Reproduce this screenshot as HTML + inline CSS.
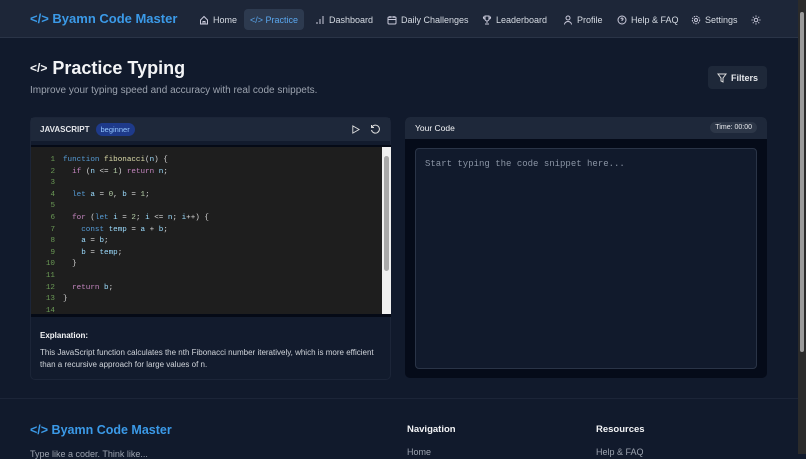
<!DOCTYPE html>
<html><head><meta charset="utf-8"><style>
*{box-sizing:border-box;margin:0;padding:0}
body{width:806px;height:454px;overflow:hidden;background:#111a2c;font-family:"Liberation Sans",sans-serif;color:#e5e7eb;position:relative}
.hdr{position:absolute;left:0;top:0;width:798px;height:38px;background:#1d2638;border-bottom:1px solid #2a3447}
.logo{position:absolute;left:30px;top:11px;color:#3b9ae8;font-weight:bold;font-size:13px}
.nav{position:absolute;top:9px;height:21px;font-size:9px;color:#d6dbe3;display:flex;align-items:center;gap:4px;padding:0 6px;border-radius:4px;white-space:nowrap}
.nav svg{width:10px;height:10px}
.sb{position:absolute;right:0;top:0;width:8px;height:454px;background:#2b2b2b}
.panel{position:absolute;border-radius:5px}
.code{font-family:"Liberation Mono",monospace;font-size:7.6px;line-height:11.6px;white-space:pre}
.ln{display:inline-block;width:24px;text-align:right;color:#6a9955;margin-right:8px}
.k{color:#569cd6}.c{color:#c586c0}.v{color:#9cdcfe}.f{color:#dcdcaa}.n{color:#b5cea8}.t{color:#d4d4d4}
</style></head><body>
<div class="hdr">
<div class="logo">&lt;/&gt; Byamn Code Master</div>
<div class="nav" style="left:193px"><svg viewBox="0 0 10 10" fill="none" stroke="#ccd" stroke-width="1"><path d="M1.5 5L5 1.5 8.5 5V9h-7z M4 9V6.5h2V9"/></svg>Home</div>
<div class="nav" style="left:244px;background:#2d3a4f;color:#5aa7ee;width:60px">&lt;/&gt; Practice</div>
<div class="nav" style="left:309px"><svg viewBox="0 0 10 10" stroke="#ccd"><path d="M2 9V7M5 9V4M8 9V1"/></svg>Dashboard</div>
<div class="nav" style="left:381px"><svg viewBox="0 0 10 10" fill="none" stroke="#ccd"><rect x="1" y="2" width="8" height="7" rx="1"/><path d="M1 4.5h8M3 1v2M7 1v2"/></svg>Daily Challenges</div>
<div class="nav" style="left:476px"><svg viewBox="0 0 10 10" fill="none" stroke="#ccd"><path d="M3 1h4v3a2 2 0 0 1-4 0zM5 6v2M3 9h4M3 2H1.5a1.5 1.5 0 0 0 1.5 2M7 2h1.5A1.5 1.5 0 0 1 7 4"/></svg>Leaderboard</div>
<div class="nav" style="left:557px"><svg viewBox="0 0 10 10" fill="none" stroke="#ccd"><circle cx="5" cy="3" r="2"/><path d="M1.5 9.5a3.5 3 0 0 1 7 0"/></svg>Profile</div>
<div class="nav" style="left:611px"><svg viewBox="0 0 10 10" fill="none" stroke="#ccd"><circle cx="5" cy="5" r="4"/><path d="M4 4a1 1 0 1 1 1 1v1M5 7.5v.3"/></svg>Help &amp; FAQ</div>
<div class="nav" style="left:685px"><svg viewBox="0 0 10 10" fill="none" stroke="#ccd"><circle cx="5" cy="5" r="1.5"/><circle cx="5" cy="5" r="3.7" stroke-dasharray="1.5 1"/></svg>Settings</div>
<div class="nav" style="left:745px"><svg viewBox="0 0 10 10" fill="none" stroke="#ccd"><circle cx="5" cy="5" r="1.8"/><path d="M5 0.5v1.2M5 8.3v1.2M0.5 5h1.2M8.3 5h1.2M1.8 1.8l.9.9M7.3 7.3l.9.9M1.8 8.2l.9-.9M7.3 2.7l.9-.9"/></svg></div>
</div>

<div style="position:absolute;left:30px;top:58px;font-size:18px;font-weight:bold;color:#f3f4f6"><span style="font-size:12px;vertical-align:2px">&lt;/&gt;</span> Practice Typing</div>
<div style="position:absolute;left:30px;top:85px;font-size:10px;color:#9ca3af">Improve your typing speed and accuracy with real code snippets.</div>
<div style="position:absolute;left:708px;top:66px;width:59px;height:23px;background:#1e2839;border-radius:4px;font-size:9px;font-weight:bold;color:#e5e7eb;display:flex;align-items:center;justify-content:center;gap:4px"><svg width="10" height="10" viewBox="0 0 10 10" fill="none" stroke="#ddd"><path d="M1 1h8L6 5v4L4 8V5z"/></svg>Filters</div>

<div class="panel" style="left:30px;top:117px;width:361px;height:263px;background:#121b2d;border:1px solid #1c2538">
<div style="height:23px;background:#1e283a;display:flex;align-items:center;padding-left:9px;font-size:8px;font-weight:bold;color:#e5e7eb">JAVASCRIPT<span style="margin-left:6px;background:#1e3a8a;color:#93c5fd;font-weight:normal;font-size:7.5px;padding:2px 5px;border-radius:7px">beginner</span>
<svg style="position:absolute;left:320px;top:7px" width="9" height="9" viewBox="0 0 10 10" fill="none" stroke="#ddd"><path d="M2 1l7 4-7 4z"/></svg>
<svg style="position:absolute;left:339px;top:6px" width="10" height="10" viewBox="0 0 10 10" fill="none" stroke="#ddd"><path d="M2 3a4 4 0 1 1-.5 3M1.5 1v2.5H4"/></svg></div>
<div style="position:absolute;left:0;top:27px;width:360px;height:172px;background:#1e1e1e;border-top:2px solid #050a16;border-bottom:3px solid #050a16;overflow:hidden">
<div class="code" style="position:absolute;left:0;top:8px"><span class="ln">1</span><span class="k">function</span> <span class="f">fibonacci</span><span class="t">(</span><span class="v">n</span><span class="t">) {</span>
<span class="ln">2</span>  <span class="c">if</span> <span class="t">(</span><span class="v">n</span> <span class="t">&lt;= </span><span class="n">1</span><span class="t">)</span> <span class="c">return</span> <span class="v">n</span><span class="t">;</span>
<span class="ln">3</span>
<span class="ln">4</span>  <span class="k">let</span> <span class="v">a</span> <span class="t">=</span> <span class="n">0</span><span class="t">,</span> <span class="v">b</span> <span class="t">=</span> <span class="n">1</span><span class="t">;</span>
<span class="ln">5</span>
<span class="ln">6</span>  <span class="c">for</span> <span class="t">(</span><span class="k">let</span> <span class="v">i</span> <span class="t">=</span> <span class="n">2</span><span class="t">;</span> <span class="v">i</span> <span class="t">&lt;=</span> <span class="v">n</span><span class="t">;</span> <span class="v">i</span><span class="t">++) {</span>
<span class="ln">7</span>    <span class="k">const</span> <span class="v">temp</span> <span class="t">=</span> <span class="v">a</span> <span class="t">+</span> <span class="v">b</span><span class="t">;</span>
<span class="ln">8</span>    <span class="v">a</span> <span class="t">=</span> <span class="v">b</span><span class="t">;</span>
<span class="ln">9</span>    <span class="v">b</span> <span class="t">=</span> <span class="v">temp</span><span class="t">;</span>
<span class="ln">10</span>  <span class="t">}</span>
<span class="ln">11</span>
<span class="ln">12</span>  <span class="c">return</span> <span class="v">b</span><span class="t">;</span>
<span class="ln">13</span><span class="t">}</span>
<span class="ln">14</span></div>
<div style="position:absolute;right:0;top:0;width:9px;height:100%;background:#f0f0f0"><div style="position:absolute;left:2px;top:9px;width:5px;height:115px;background:#a8a8a8;border-radius:3px"></div></div>
</div>
<div style="position:absolute;left:9px;top:213px;font-size:8px;font-weight:bold;color:#f3f4f6">Explanation:</div>
<div style="position:absolute;left:9px;top:229px;width:345px;font-size:8px;line-height:12px;color:#d1d5db">This JavaScript function calculates the nth Fibonacci number iteratively, which is more efficient than a recursive approach for large values of n.</div>
</div>

<div class="panel" style="left:405px;top:117px;width:362px;height:261px;background:#050b19;overflow:hidden">
<div style="height:22px;background:#1e283a;display:flex;align-items:center;padding-left:10px;font-size:8.5px;color:#f3f4f6">Your Code
<span style="position:absolute;right:10px;top:5px;background:#2d3748;border-radius:7px;font-size:7px;padding:2px 5px;color:#e5e7eb">Time: 00:00</span></div>
<div style="position:absolute;left:10px;top:31px;width:342px;height:221px;background:#111a2c;border:1px solid #2a3447;border-radius:4px;font-family:'Liberation Mono',monospace;font-size:9px;color:#8b95a5;padding:10px 9px">Start typing the code snippet here...</div>
</div>

<div style="position:absolute;left:0;top:398px;width:798px;border-top:1px solid #1c2538"></div>
<div style="position:absolute;left:30px;top:423px;font-size:12.5px;font-weight:bold;color:#3b9ae8">&lt;/&gt; Byamn Code Master</div>
<div style="position:absolute;left:30px;top:449px;font-size:9px;color:#9ca3af">Type like a coder. Think like...</div>
<div style="position:absolute;left:407px;top:424px;font-size:9.5px;font-weight:bold;color:#f3f4f6">Navigation</div>
<div style="position:absolute;left:407px;top:447px;font-size:9px;color:#9ca3af">Home</div>
<div style="position:absolute;left:596px;top:424px;font-size:9.5px;font-weight:bold;color:#f3f4f6">Resources</div>
<div style="position:absolute;left:596px;top:447px;font-size:9px;color:#9ca3af">Help &amp; FAQ</div>

<div class="sb"><div style="position:absolute;left:2px;top:12px;width:4px;height:340px;background:#9a9a9a;border-radius:2px"></div></div>
</body></html>
